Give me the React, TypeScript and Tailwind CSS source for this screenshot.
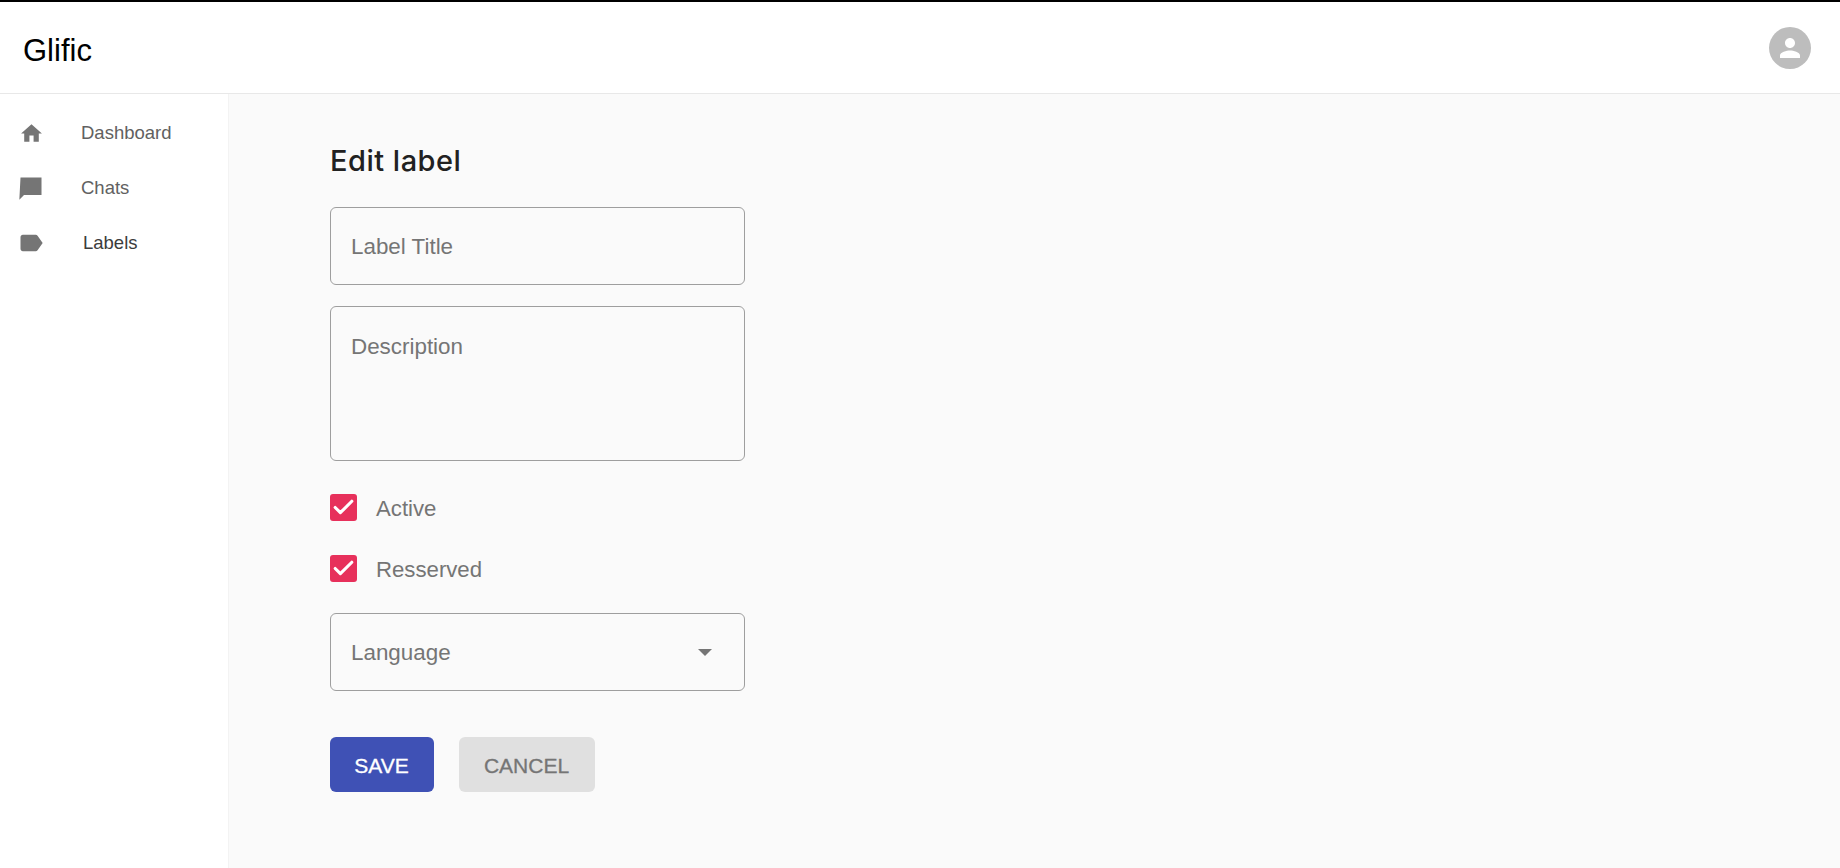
import { Check } from "lucide-react";

const font = "font-['Liberation_Sans',Arial,sans-serif]";

function HomeIcon() {
  return (
    <svg viewBox="0 0 24 24" className="h-[25px] w-[25px] fill-[#757575]">
      <path d="M10 20v-6h4v6h5v-8h3L12 3 2 12h3v8z" />
    </svg>
  );
}

function ChatIcon() {
  return (
    <svg viewBox="0 0 24 24" className="h-[28px] w-[28px] fill-[#757575]">
      <path d="M21 3H3L2 22l4-4h15z" />
    </svg>
  );
}

function LabelIcon() {
  return (
    <svg viewBox="0 0 24 24" className="h-[28px] w-[28px] fill-[#757575]">
      <path d="M17.63 5.84C17.27 5.33 16.67 5 16 5L5 5.01C3.9 5.01 3 5.9 3 7v10c0 1.1.9 1.99 2 1.99L16 19c.67 0 1.27-.33 1.63-.84L22 12l-4.37-6.16z" />
    </svg>
  );
}

function CheckRow({ label, className }: { label: string; className: string }) {
  return (
    <div className={`flex h-[27px] items-center ${className}`}>
      <div className="flex h-[27px] w-[27px] items-center justify-center rounded-[3px] bg-[#e7305b]">
        <Check className="h-[25px] w-[25px] text-white" strokeWidth={3} />
      </div>
      <span className="ml-[19px] pt-[2px] text-[22.2px] text-[#757575]">{label}</span>
    </div>
  );
}

export default function App() {
  return (
    <div className={`flex h-[868px] flex-col overflow-hidden bg-white ${font}`}>
      <header className="flex h-[94px] shrink-0 items-center justify-between border-t-2 border-b border-t-black border-b-[#e8e8e8] bg-white pr-[29px] pl-[23px]">
        <div className="pt-[7px] text-[31px] text-black">Glific</div>
        <div className="flex h-[42px] w-[42px] items-center justify-center rounded-full bg-[#bdbdbd]">
          <svg viewBox="0 0 24 24" className="h-[30px] w-[30px] fill-white">
            <path d="M12 12c2.21 0 4-1.79 4-4s-1.79-4-4-4-4 1.79-4 4 1.79 4 4 4zm0 2c-2.67 0-8 1.34-8 4v2h16v-2c0-2.66-5.33-4-8-4z" />
          </svg>
        </div>
      </header>

      <div className="flex min-h-0 flex-1">
        <aside className="flex w-[229px] shrink-0 flex-col border-r border-[#f3f3f3] bg-white pt-[24px] text-[18.5px]">
          <div className="flex h-[30px] items-center pl-[19px]">
            <HomeIcon />
            <span className="ml-[37px] text-[#616161]">Dashboard</span>
          </div>
          <div className="mt-[25px] flex h-[30px] items-center pl-[17px]">
            <ChatIcon />
            <span className="ml-[36px] text-[#616161]">Chats</span>
          </div>
          <div className="mt-[25px] flex h-[30px] items-center pl-[17px]">
            <LabelIcon />
            <span className="ml-[38px] text-[#3c3c3c]">Labels</span>
          </div>
        </aside>

        <main className="flex-1 bg-[#fafafa] pt-[49px] pl-[101px]">
          <h1 className="font-['Inter'] text-[29px] leading-[36px] font-medium tracking-[0.5px] text-[#212121]">Edit label</h1>

          <div className="mt-[28px] flex h-[78px] w-[415px] items-center rounded-[6px] border border-[#9e9e9e] pt-[1px] pr-[21px] pl-[20px] text-[22.4px] text-[#757575]">
            Label Title
          </div>
          <div className="mt-[21px] h-[155px] w-[415px] rounded-[6px] border border-[#9e9e9e] pt-[28px] pr-[21px] pl-[20px] text-[22.4px] leading-[24px] text-[#757575]">
            Description
          </div>

          <CheckRow label="Active" className="mt-[33px]" />
          <CheckRow label="Resserved" className="mt-[34px]" />

          <div className="mt-[31px] flex h-[78px] w-[415px] items-center justify-between rounded-[6px] border border-[#9e9e9e] pr-[32px] pl-[20px] text-[22.4px] text-[#757575]">
            <span className="pt-[2px]">Language</span>
            <span className="h-0 w-0 border-x-[7px] border-t-[7px] border-x-transparent border-t-[#757575]" />
          </div>

          <div className="mt-[46px] flex gap-[25px] text-[21px] [-webkit-text-stroke:0.3px]">
            <button className="h-[55px] w-[104px] rounded-[6px] bg-[#3f51b5] pt-[2px] pr-[1px] text-white">SAVE</button>
            <button className="h-[55px] w-[136px] rounded-[6px] bg-[#e0e0e0] pt-[2px] pr-[1px] text-[#757575]">CANCEL</button>
          </div>
        </main>
      </div>
    </div>
  );
}
